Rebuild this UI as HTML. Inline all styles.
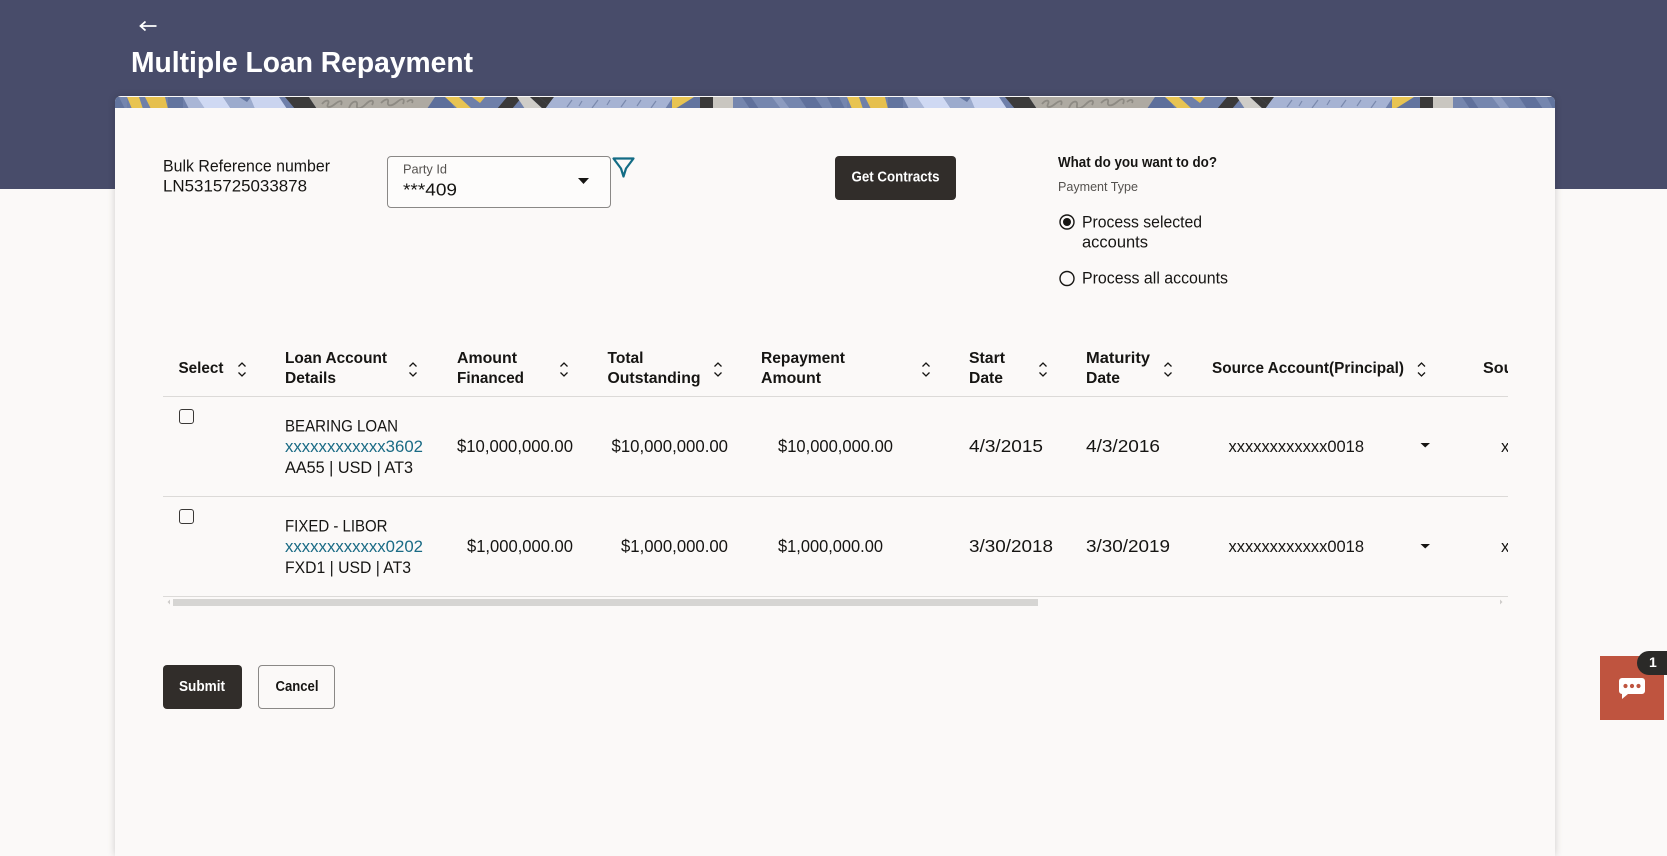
<!DOCTYPE html>
<html lang="en">
<head>
<meta charset="utf-8">
<title>Multiple Loan Repayment</title>
<style>
html,body{margin:0;padding:0;width:1667px;height:805px;overflow:hidden;background:#fbf9f8;font-family:"Liberation Sans",sans-serif}
.hdr{position:absolute;left:0;top:0;width:1667px;height:189px;background:#484c6a}
.card{position:absolute;left:115px;top:96px;width:1440px;height:760px;background:#fbf9f8;border-radius:6px 6px 0 0;box-shadow:0 0 8px rgba(0,0,0,.18)}
.banner{position:absolute;left:115px;top:96px;width:1440px;height:12px;border-radius:6px 6px 0 0;overflow:hidden}
.sel{position:absolute;left:387px;top:156px;width:222px;height:50px;border:1px solid #8a8886;border-radius:4px;background:#fdfcfb}
.btn{position:absolute;background:#312d2a;border-radius:4px}
.btn2{position:absolute;left:258px;top:665px;width:75px;height:42px;border:1px solid #8a8886;border-radius:4px}
.ln{position:absolute;left:163px;width:1345px;height:1px;background:#dcdad8}
.cb{position:absolute;left:179px;width:13px;height:13px;border:1.5px solid #3a3836;border-radius:3px}
.thumb{position:absolute;left:173px;top:599px;width:865px;height:7px;background:#d6d5d3}
.chat{position:absolute;left:1600px;top:656px;width:64px;height:64px;background:#bf543f}
.badge{position:absolute;left:1637px;top:651px;width:30px;height:24px;background:#2b2a28;border-radius:12px 0 0 12px}
svg.ov{position:absolute;left:0;top:0}
text{font-family:"Liberation Sans",sans-serif;fill:#161513}
.t{font-size:16.5px}
.n{font-size:17.5px}
.h{font-size:16px;font-weight:bold}
.a{fill:#1a6b85}
</style>
</head>
<body>
<div class="hdr"></div>
<div class="card"></div>
<div class="banner">
<svg width="1440" height="12" xmlns="http://www.w3.org/2000/svg">
<defs>
<pattern id="p" patternUnits="userSpaceOnUse" x="12" y="0" width="720" height="12">
<rect width="720" height="12" fill="#6e7fa9"/>
<polygon points="0,0 12,0 16,12 5,12" fill="#e8c452"/>
<polygon points="18,0 38,0 41,12 24,12" fill="#e6c04e"/>
<rect x="41" width="15" height="12" fill="#62749e"/>
<polygon points="56,0 70,0 78,12 62,12" fill="#a9b6d6"/>
<polygon points="70,0 96,0 104,12 78,12" fill="#cfd9f3"/>
<polygon points="96,0 123,0 128,12 104,12" fill="#9cabcd"/>
<polygon points="112,0 124,0 120,5" fill="#62749e"/>
<polygon points="123,0 152,0 160,12 128,12" fill="#cad4ef"/>
<polygon points="158,0 182,0 190,12 168,12" fill="#3c3b3b"/>
<polygon points="182,0 308,0 300,12 190,12" fill="#aeaaa2"/>
<path d="M195 7c4-5 8-4 6 0s2 4 7 0 8-4 6 1M222 11c3-8 9-8 8-3s4 4 9-1 9-4 6 1M254 6c4-4 8-5 7-1s3 5 9 0 8-3 6 2M280 5c3-3 7-3 5 1" fill="none" stroke="#8d8a83" stroke-width="1.8"/>
<polygon points="308,0 321,0 328,12 300,12" fill="#5d6f9b"/>
<polygon points="318,0 332,0 345,12 331,12" fill="#e8c452"/>
<polygon points="345,0 358,0 353,6" fill="#e6c04e"/>
<polygon points="380,0 370,12 385,12 395,0" fill="#3a3939"/>
<polygon points="390,0 403,0 416,12 398,12" fill="#cfcdc8"/>
<polygon points="403,0 412,0 426,12 416,12" fill="#3a3939"/>
<polygon points="412,0 427,0 418,12 426,12" fill="#3a3939"/>
<polygon points="427,0 546,0 538,12 418,12" fill="#a6b3d3"/>
<path d="M440 10l5-7M452 9l3-5M465 11l6-8M480 8l3-5M494 10l5-7M510 9l4-6M524 11l5-7" stroke="#7a89ad" stroke-width="1.2" fill="none"/>
<polygon points="545,0 567,0 553,10 545,12" fill="#e8c452"/>
<polygon points="567,0 573,0 573,12 548,12" fill="#62749e"/>
<rect x="573" width="13" height="12" fill="#3a3939"/>
<rect x="586" width="20" height="12" fill="#c9c6c0"/>
<rect x="606" width="114" height="12" fill="#7586ae"/>
<polygon points="615,0 624,0 632,12 623,12" fill="#5f709b"/>
<polygon points="645,0 654,0 663,12 654,12" fill="#8d9cc0"/>
<polygon points="672,0 688,0 696,12 680,12" fill="#5f709b"/>
<polygon points="700,0 712,0 718,12 706,12" fill="#62749e"/>
</pattern>
</defs>
<rect width="1440" height="12" fill="url(#p)"/>
</svg>
</div>
<div class="sel"></div>
<div class="btn" style="left:835px;top:156px;width:121px;height:44px"></div>
<div class="btn" style="left:163px;top:665px;width:79px;height:44px"></div>
<div class="btn2"></div>
<div class="ln" style="top:396px"></div>
<div class="ln" style="top:496px"></div>
<div class="ln" style="top:596px"></div>
<div class="cb" style="top:409px"></div>
<div class="cb" style="top:509px"></div>
<div class="thumb"></div>
<div class="chat"></div>
<div class="badge"></div>

<svg class="ov" width="1667" height="805" xmlns="http://www.w3.org/2000/svg">
<defs><clipPath id="c"><rect x="163" y="340" width="1345" height="260"/></clipPath></defs>

<path d="M140.5 26H156.5M145.5 21.5l-5 4.500 5 4.500" fill="none" stroke="#fff" stroke-width="1.8"/>
<text x="131" y="72" font-size="29" font-weight="bold" style="fill:#fff" textLength="342" lengthAdjust="spacingAndGlyphs">Multiple Loan Repayment</text>

<text class="t" x="163" y="171.500" textLength="167" lengthAdjust="spacingAndGlyphs">Bulk Reference number</text>
<text class="t" x="163" y="191.500" textLength="144" lengthAdjust="spacingAndGlyphs">LN5315725033878</text>

<text x="403" y="173.500" font-size="13" style="fill:#55524f" textLength="44" lengthAdjust="spacingAndGlyphs">Party Id</text>
<text x="403" y="195.500" font-size="17.500" textLength="54" lengthAdjust="spacingAndGlyphs">***409</text>
<polygon points="578,178 589,178 583.500,184" fill="#161513"/>
<path d="M613.500 158.500H633.500L626 168.500 623.500 176.500 621 168.500Z" fill="none" stroke="#136c85" stroke-width="2.200" stroke-linejoin="round"/>

<text x="851.500" y="181.500" font-size="14.500" font-weight="bold" style="fill:#fff" textLength="88" lengthAdjust="spacingAndGlyphs">Get Contracts</text>
<text x="1058" y="167" font-size="14.500" font-weight="bold" textLength="159" lengthAdjust="spacingAndGlyphs">What do you want to do?</text>
<text x="1058" y="191" font-size="12.500" style="fill:#55524f" textLength="80" lengthAdjust="spacingAndGlyphs">Payment Type</text>

<circle cx="1067" cy="222" r="7" fill="none" stroke="#161513" stroke-width="1.400"/>
<circle cx="1067" cy="222" r="4" fill="#161513"/>
<text class="t" x="1082" y="227.500" textLength="120" lengthAdjust="spacingAndGlyphs">Process selected</text>
<text class="t" x="1082" y="247.500" textLength="66" lengthAdjust="spacingAndGlyphs">accounts</text>
<circle cx="1067" cy="278.500" r="7" fill="none" stroke="#161513" stroke-width="1.400"/>
<text class="t" x="1082" y="283.500" textLength="146" lengthAdjust="spacingAndGlyphs">Process all accounts</text>

<g clip-path="url(#c)">
<text class="h" x="178.500" y="373" textLength="45" lengthAdjust="spacingAndGlyphs">Select</text>
<text class="h" x="285" y="363" textLength="102" lengthAdjust="spacingAndGlyphs">Loan Account</text>
<text class="h" x="285" y="383" textLength="51" lengthAdjust="spacingAndGlyphs">Details</text>
<text class="h" x="457" y="363" textLength="60" lengthAdjust="spacingAndGlyphs">Amount</text>
<text class="h" x="457" y="383" textLength="67" lengthAdjust="spacingAndGlyphs">Financed</text>
<text class="h" x="607.500" y="363" textLength="36" lengthAdjust="spacingAndGlyphs">Total</text>
<text class="h" x="607.500" y="383" textLength="93" lengthAdjust="spacingAndGlyphs">Outstanding</text>
<text class="h" x="761" y="363" textLength="84" lengthAdjust="spacingAndGlyphs">Repayment</text>
<text class="h" x="761" y="383" textLength="60" lengthAdjust="spacingAndGlyphs">Amount</text>
<text class="h" x="969" y="363" textLength="36" lengthAdjust="spacingAndGlyphs">Start</text>
<text class="h" x="969" y="383" textLength="34" lengthAdjust="spacingAndGlyphs">Date</text>
<text class="h" x="1086" y="363" textLength="64" lengthAdjust="spacingAndGlyphs">Maturity</text>
<text class="h" x="1086" y="383" textLength="34" lengthAdjust="spacingAndGlyphs">Date</text>
<text class="h" x="1212" y="373" textLength="192" lengthAdjust="spacingAndGlyphs">Source Account(Principal)</text>
<text class="h" x="1483" y="373" textLength="192" lengthAdjust="spacingAndGlyphs">Source Account(Interest)</text>

<path fill="none" stroke="#161513" stroke-width="1.300" d="
M238.500 366.500l3.500-3.500 3.500 3.500M238.500 372.500l3.500 3.500 3.500-3.500
M409.500 366.500l3.500-3.500 3.500 3.500M409.500 372.500l3.500 3.500 3.500-3.500
M560.500 366.500l3.500-3.500 3.500 3.500M560.500 372.500l3.500 3.500 3.500-3.500
M714.500 366.500l3.500-3.500 3.500 3.500M714.500 372.500l3.500 3.500 3.500-3.500
M922.500 366.500l3.500-3.500 3.500 3.500M922.500 372.500l3.500 3.500 3.500-3.500
M1039.500 366.500l3.500-3.500 3.500 3.500M1039.500 372.500l3.500 3.500 3.500-3.500
M1164.500 366.500l3.500-3.500 3.500 3.500M1164.500 372.500l3.500 3.500 3.500-3.500
M1418 366.500l3.500-3.500 3.500 3.500M1418 372.500l3.500 3.500 3.500-3.500"/>

<text class="t" x="285" y="431.500" textLength="113" lengthAdjust="spacingAndGlyphs">BEARING LOAN</text>
<text class="t a" x="285" y="452" textLength="138" lengthAdjust="spacingAndGlyphs">xxxxxxxxxxxx3602</text>
<text class="t" x="285" y="473" textLength="128" lengthAdjust="spacingAndGlyphs">AA55 | USD | AT3</text>
<text class="n" x="457" y="452" textLength="116" lengthAdjust="spacingAndGlyphs">$10,000,000.00</text>
<text class="n" x="611.500" y="452" textLength="116.500" lengthAdjust="spacingAndGlyphs">$10,000,000.00</text>
<text class="n" x="778" y="452" textLength="115" lengthAdjust="spacingAndGlyphs">$10,000,000.00</text>
<text class="n" x="969" y="452" textLength="74" lengthAdjust="spacingAndGlyphs">4/3/2015</text>
<text class="n" x="1086" y="452" textLength="74" lengthAdjust="spacingAndGlyphs">4/3/2016</text>
<text class="t" x="1228.500" y="452" textLength="135.500" lengthAdjust="spacingAndGlyphs">xxxxxxxxxxxx0018</text>
<polygon points="1420.500,443 1430,443 1425.200,447.500" fill="#161513"/>
<text class="t" x="1501" y="452" textLength="135.500" lengthAdjust="spacingAndGlyphs">xxxxxxxxxxxx0018</text>

<text class="t" x="285" y="531.500" textLength="102.500" lengthAdjust="spacingAndGlyphs">FIXED - LIBOR</text>
<text class="t a" x="285" y="552" textLength="138" lengthAdjust="spacingAndGlyphs">xxxxxxxxxxxx0202</text>
<text class="t" x="285" y="573" textLength="126" lengthAdjust="spacingAndGlyphs">FXD1 | USD | AT3</text>
<text class="n" x="467" y="552" textLength="106" lengthAdjust="spacingAndGlyphs">$1,000,000.00</text>
<text class="n" x="621" y="552" textLength="107" lengthAdjust="spacingAndGlyphs">$1,000,000.00</text>
<text class="n" x="778" y="552" textLength="105" lengthAdjust="spacingAndGlyphs">$1,000,000.00</text>
<text class="n" x="969" y="552" textLength="84" lengthAdjust="spacingAndGlyphs">3/30/2018</text>
<text class="n" x="1086" y="552" textLength="84" lengthAdjust="spacingAndGlyphs">3/30/2019</text>
<text class="t" x="1228.500" y="552" textLength="135.500" lengthAdjust="spacingAndGlyphs">xxxxxxxxxxxx0018</text>
<polygon points="1420.500,544 1430,544 1425.200,548.500" fill="#161513"/>
<text class="t" x="1501" y="552" textLength="135.500" lengthAdjust="spacingAndGlyphs">xxxxxxxxxxxx0018</text>
</g>
<polygon points="170,599.500 170,604.500 167.500,602" fill="#cfcdcb"/>
<polygon points="1500,599.500 1500,604.500 1502.500,602" fill="#cfcdcb"/>

<text x="179" y="691" font-size="14.500" font-weight="bold" style="fill:#fff" textLength="46" lengthAdjust="spacingAndGlyphs">Submit</text>
<text x="275.500" y="691" font-size="14.500" font-weight="bold" textLength="43" lengthAdjust="spacingAndGlyphs">Cancel</text>

<path d="M1622 678H1642a3 3 0 0 1 3 3V691a3 3 0 0 1-3 3H1628L1622 699V694a3 3 0 0 1-3-3V681a3 3 0 0 1 3-3Z" fill="#fff"/>
<circle cx="1625.500" cy="686" r="2.100" fill="#bf543f"/>
<circle cx="1632" cy="686" r="2.100" fill="#bf543f"/>
<circle cx="1638.500" cy="686" r="2.100" fill="#bf543f"/>
<text x="1649" y="667" font-size="14" font-weight="bold" style="fill:#fff">1</text>
</svg>
</body>
</html>
